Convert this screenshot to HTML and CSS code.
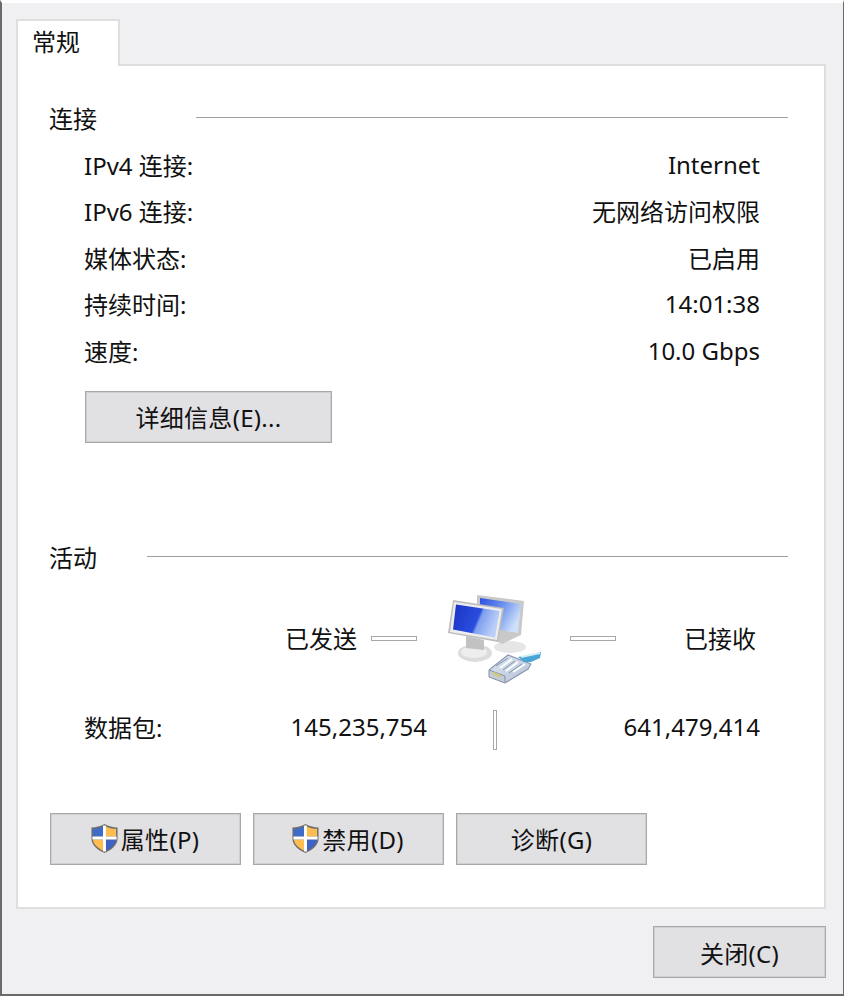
FILE: index.html
```html
<!DOCTYPE html>
<html lang="zh-CN">
<head>
<meta charset="utf-8">
<title>状态</title>
<link rel="stylesheet" href="styles.css">
</head>
<body>
<div class="window">
  <div class="tabs"><div class="tab">常规</div></div>
  <main class="panel">
    <section class="group conn">
      <div class="legend"><span class="ltext">连接</span><i class="rule"></i></div>
      <div class="rows">
        <div class="row"><span>IPv4 连接:</span><span>Internet</span></div>
        <div class="row"><span>IPv6 连接:</span><span>无网络访问权限</span></div>
        <div class="row"><span>媒体状态:</span><span>已启用</span></div>
        <div class="row"><span>持续时间:</span><span>14:01:38</span></div>
        <div class="row"><span>速度:</span><span>10.0 Gbps</span></div>
      </div>
      <button class="btn details">详细信息(E)...</button>
    </section>
    <section class="group act">
      <div class="legend"><span class="ltext">活动</span><i class="rule"></i></div>
      <div class="flow">
        <span class="sent">已发送</span>
        <i class="dash"></i>
        <svg class="net" width="110" height="100" viewBox="0 0 110 100">
          <defs>
            <linearGradient id="scr" x1="0" y1="0" x2="1" y2="0.3">
              <stop offset="0" stop-color="#1b33c4"/>
              <stop offset="0.6" stop-color="#2a4ede"/>
              <stop offset="0.66" stop-color="#7f9fef"/>
              <stop offset="1" stop-color="#b9cef8"/>
            </linearGradient>
            <linearGradient id="scrb" x1="0" y1="0" x2="1" y2="0.5">
              <stop offset="0" stop-color="#2a4fe0"/>
              <stop offset="0.55" stop-color="#6f95ee"/>
              <stop offset="1" stop-color="#cfe0fa"/>
            </linearGradient>
            <linearGradient id="plug" x1="0" y1="0" x2="1" y2="1">
              <stop offset="0" stop-color="#dfe6f0"/>
              <stop offset="1" stop-color="#b4c2d8"/>
            </linearGradient>
            <filter id="soft" x="-10%" y="-10%" width="120%" height="120%"><feGaussianBlur stdDeviation="0.7"/></filter>
          </defs>
          <g filter="url(#soft)">
            <ellipse cx="70" cy="57" rx="16" ry="6" fill="#e6e6e6"/>
            <path d="M37 5 L84 11 L81 45 L62 54 L37 42 Z" fill="#c9c9c9"/>
            <path d="M40 8 L81 14 L78 43 L60 40 L40 14 Z" fill="url(#scrb)"/>
            <ellipse cx="35" cy="63" rx="17" ry="9" fill="#dcdcdc"/>
            <ellipse cx="34" cy="62" rx="13" ry="6" fill="#eeeeee"/>
            <path d="M26 46 L44 50 L44 60 L26 58 Z" fill="#c2c2c2"/>
            <path d="M13 10 L64 18 L58 52 L8 43 Z" fill="#bdbdbd"/>
            <path d="M14 12 L62 19 L57 50 L10 42 Z" fill="#ededed"/>
            <path d="M16 14.500 L59.500 21 L55 47.500 L13 39.500 Z" fill="url(#scr)"/>
            <path d="M49 80 L68 65 L91 74 L88 79 L65 93 L49 87 Z" fill="url(#plug)"/>
            <path d="M49 80 L65 86 L65 93 L49 87 Z" fill="#c3ccd9" stroke="#87909f" stroke-width="1"/>
            <path d="M53 83 L61 86.500" stroke="#cfc984" stroke-width="3"/>
            <path d="M49 80 L68 65 L91 74" fill="none" stroke="#8d9ab2" stroke-width="1.200"/>
            <path d="M60 78 L72 69 M66 81 L78 72 M73 82 L85 74" stroke="#ffffff" stroke-width="1.800"/>
            <path d="M56 76 L68 68 M63 80 L75 71 M69 83 L82 74" stroke="#8493b0" stroke-width="1"/>
            <path d="M65 93 L88 79 L91 74" fill="none" stroke="#8a97b0" stroke-width="1.200"/>
            <path d="M78 67 L90 65 L101 62 L100 68 L91 72 L84 72 Z" fill="#4aa5d6"/>
            <path d="M81 67 L100 63" stroke="#d4eef8" stroke-width="2"/>
          </g>
        </svg>
        <i class="dash"></i>
        <span class="recv">已接收</span>
      </div>
      <div class="packets">
        <span class="plabel">数据包:</span>
        <span class="pnum psent">145,235,754</span>
        <i class="vbar"></i>
        <span class="pnum precv">641,479,414</span>
      </div>
      <div class="actions">
        <button class="btn act-btn">
          <svg class="shield" width="29" height="31" viewBox="0 0 30 32"><path d="M15 1 C11 3.500 6 4.500 1.500 4.500 L1.500 16 C1.500 23 8 28 15 31 C22 28 28.500 23 28.500 16 L28.500 4.500 C24 4.500 19 3.500 15 1 Z" fill="#6d6d6d"/><path d="M13.500 3.500 C10.500 5 7 6 3 6 L3 14 L13.500 14 Z" fill="#3f6bc8"/><path d="M16.500 3.500 C19.500 5 23 6 27 6 L27 14 L16.500 14 Z" fill="#fdbd50"/><path d="M3 17 L13.500 17 L13.500 28.500 C8 26 3.500 22 3 17 Z" fill="#fdbd50"/><path d="M16.500 17 L27 17 C26.500 22 22 26 16.500 28.500 Z" fill="#3f63c4"/><path d="M15 2.500 L15 29.500 M2.500 15.500 L27.500 15.500" stroke="#fff" stroke-width="3"/></svg>
          属性(P)
        </button>
        <button class="btn act-btn">
          <svg class="shield" width="29" height="31" viewBox="0 0 30 32"><path d="M15 1 C11 3.500 6 4.500 1.500 4.500 L1.500 16 C1.500 23 8 28 15 31 C22 28 28.500 23 28.500 16 L28.500 4.500 C24 4.500 19 3.500 15 1 Z" fill="#6d6d6d"/><path d="M13.500 3.500 C10.500 5 7 6 3 6 L3 14 L13.500 14 Z" fill="#3f6bc8"/><path d="M16.500 3.500 C19.500 5 23 6 27 6 L27 14 L16.500 14 Z" fill="#fdbd50"/><path d="M3 17 L13.500 17 L13.500 28.500 C8 26 3.500 22 3 17 Z" fill="#fdbd50"/><path d="M16.500 17 L27 17 C26.500 22 22 26 16.500 28.500 Z" fill="#3f63c4"/><path d="M15 2.500 L15 29.500 M2.500 15.500 L27.500 15.500" stroke="#fff" stroke-width="3"/></svg>
          禁用(D)
        </button>
        <button class="btn act-btn">诊断(G)</button>
      </div>
    </section>
  </main>
  <footer class="foot"><button class="btn close">关闭(C)</button></footer>
</div>
</body>
</html>
```
FILE: styles.css
```css
* { box-sizing: border-box; }
html, body { margin: 0; height: 100%; }
body {
  width: 844px;
  height: 996px;
  overflow: hidden;
  font-family: "Noto Sans", "Noto Sans CJK SC", sans-serif;
  font-size: 24px;
  color: #111;
  background: #f0eff2;
}
.window {
  width: 844px;
  height: 996px;
  border-left: 2px solid #6a6a6a;
  border-right: 1px solid #6a6a6a;
  border-bottom: 2px solid #6a6a6a;
  border-top: 3px solid #fff;
  padding: 16px 18px 0 14px;
  display: flex;
  flex-direction: column;
}
.tabs { display: flex; height: 45px; }
.tab {
  width: 104px;
  height: 47px;
  background: #fff;
  border: 2px solid #dedede;
  border-bottom: 0;
  padding-left: 14px;
  line-height: 42px;
  position: relative;
  z-index: 1;
}
.panel {
  width: 810px;
  height: 845px;
  flex: none;
  background: #fff;
  border: 2px solid #dedede;
  padding: 0 36px 0 31px;
}
.legend {
  display: flex;
  align-items: center;
  height: 36px;
}
.ltext { flex: none; width: 48px; white-space: nowrap; margin-bottom: 4px; }
.rule { display: block; height: 1px; background: #a0a0a0; margin-top: -4px; }
.conn .legend { margin-top: 35px; }
.conn .rule { width: 592px; margin-left: 99px; }
.act .rule { width: 641px; margin-left: 50px; }
.rows { padding: 4px 28px 0 35px; }
.row {
  display: flex;
  justify-content: space-between;
  align-items: center;
  height: 46.5px;
}
.btn {
  font: inherit;
  letter-spacing: 0.3px;
  color: #111;
  background: #e1e0e3;
  border: 1px solid #a8a8a8;
  box-shadow: inset 0 0 0 1px #cfcfd1;
  padding: 0;
  display: flex;
  align-items: center;
  justify-content: center;
}
.details { width: 247px; height: 52px; margin: 17px 0 0 36px; }
.act { margin-top: 98px; }
.flow { display: flex; align-items: center; height: 100px; margin-top: 13px; }
.sent { margin: 0 0 4px 236px; width: 72px; }
.recv { width: 72px; margin: 0 0 4px 68px; }
.dash { display: block; flex: none; width: 46px; height: 5px; border: 1px solid #a8a8a8; background: #fff; margin-top: -2px; }
.sent + .dash { margin-left: 14px; margin-right: 23px; }
.net { margin-right: 20px; flex: none; }
.packets { display: flex; align-items: center; height: 40px; margin-top: 20px; padding-left: 35px; }
.plabel { width: 205px; margin-bottom: 6px; }
.pnum { width: 138px; text-align: right; flex: none; margin-bottom: 6px; }
.vbar { display: block; flex: none; width: 4px; height: 40px; border: 1px solid #a8a8a8; margin-left: 66px; }
.precv { width: 263px; }
.actions { display: flex; gap: 12px; margin: 63px 0 0 1px; }
.act-btn { width: 191px; height: 52px; }
.shield { margin: 0 2px 0 -2px; flex: none; }
.foot { display: flex; justify-content: flex-end; margin: 17px -1px 0 0; }
.close { width: 173px; height: 52px; }
```
